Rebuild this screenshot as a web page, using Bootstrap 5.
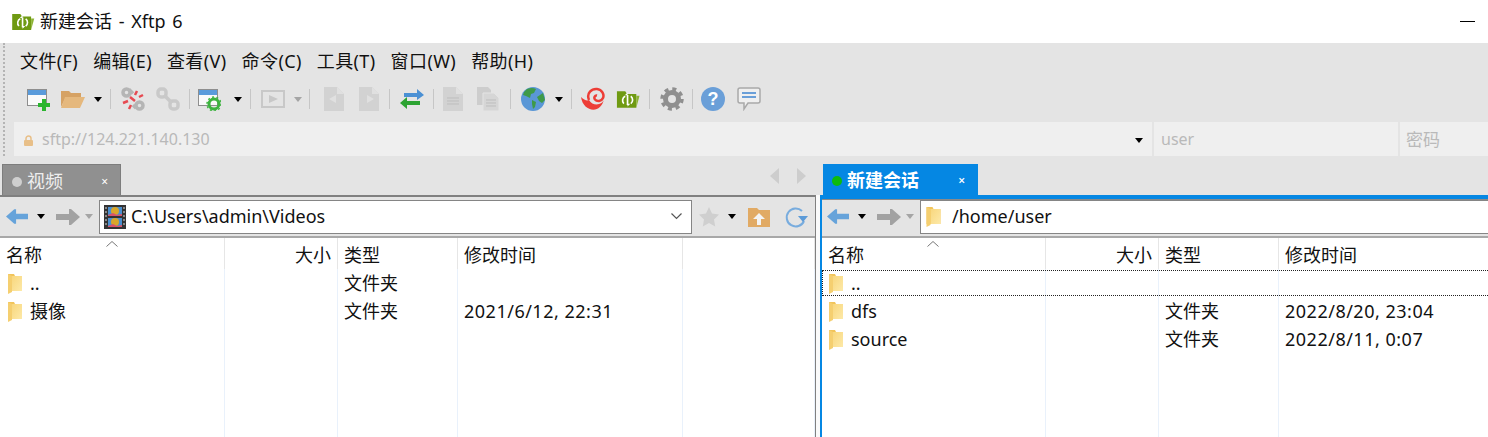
<!DOCTYPE html>
<html lang="zh-CN">
<head>
<meta charset="utf-8">
<title>新建会话 - Xftp 6</title>
<link href="https://cdn.jsdelivr.net/npm/bootstrap@5.3.0/dist/css/bootstrap.min.css" rel="stylesheet">
<style>
html,body{height:437px;overflow:hidden;background:#fff}
body{font-family:"Noto Sans","Noto Sans CJK SC",sans-serif;font-size:18px;color:#111;line-height:1.2}
svg{display:block;flex:none}
.win-title{height:43px;padding-left:11px;gap:5px}
.win-title .t{font-size:18px;word-spacing:2px}
.win-min{width:15px;height:1px;background:#000;margin-right:13px}
.chrome{background:#e4e4e4;height:113px}
.grip{width:3px;margin-left:3px;border-left:2px dotted #b4b4b4;height:113px;flex:none}
.chrome-col{min-width:0;flex:1}
.menu-row{height:37px;padding-left:14px;gap:15px;font-size:18px;letter-spacing:.4px}
.tool-row{height:38px;padding-left:20px}
.sep{width:1px;height:20px;background:#c6c6c6;flex:none}
.tri{width:0;height:0;border-left:4.5px solid transparent;border-right:4.5px solid transparent;border-top:5px solid #000;flex:none}
.tri.off{border-top-color:#a5a5a5}
.m4{margin-left:4px}.m5{margin-left:5px}.m6{margin-left:6px}.m7{margin-left:7px}.m8{margin-left:8px}.m9{margin-left:9px}.m10{margin-left:10px}.m11{margin-left:11px}.m12{margin-left:12px}.m13{margin-left:13px}.m14{margin-left:14px}.m15{margin-left:15px}
.addr-row{height:38px;padding-left:8px;padding-top:4px;gap:2px}
.addr-f{background:#efefef;height:34px;color:#b9b9b9;font-size:16px;padding-top:2px}
.addr-main{width:1138px;padding-left:9px;padding-right:9px}
.addr-user{width:244px;padding-left:7px}
.addr-pass{flex:1;padding-left:6px;font-size:17px}
.tabs-row{height:39px;background:#e4e4e4;flex:none}
.tab-l,.tab-r{height:31px;margin-top:8px;padding-left:9px;padding-top:3px;font-size:18px}
.tab-l{width:119px;margin-left:2px;background:#909090;color:#eee;border:1px solid #7d7d7d;border-bottom:0}
.tab-r{width:155px;margin-left:17px;background:#0587e3;color:#fff;font-weight:600}
.dot{width:10px;height:10px;border-radius:50%;margin-right:5px;flex:none}
.dot-off{background:#cfcfcf}
.dot-on{background:#0dbb0d}
.tab-x{margin-left:auto;color:#fff;font-size:12px;line-height:1}
.tab-l .tab-x{margin-right:12px}
.tab-r .tab-x{margin-right:13px}
.arrows{margin-left:649px;gap:16px}
.panes{height:242px}
.pane-l{width:816px;border-right:1px solid #808080;border-top:2px solid #808080;flex:none}
.pane-mid{width:4px;background:#fafafa;flex:none}
.pane-r{flex:1;min-width:0;border-left:2px solid #0587e3;border-top:4px solid #0587e3;position:relative}
.nav-row{height:39px;background:#e4e4e4;border-bottom:2px solid #a8a8a8;padding-left:6px;box-sizing:content-box;flex:none}
.pane-r .nav-row{height:33px;padding-bottom:3px;border-top:1px solid #8a8a8a;padding-left:5px}
.path-box{height:34px;background:#fff;border:1px solid #858585;padding-left:4px;gap:5px;font-size:18px}
.pane-l .path-box{width:593px;margin-left:6px;padding-right:5px}
.pane-r .path-box{flex:1;margin-left:6px;padding-left:5px;gap:11px;border-right:0}
.lst{display:grid;font-size:18px;grid-template-rows:31px 28px 28px 28px 1fr;height:100%}
.pane-l .lst{grid-template-columns:225px 113px 120px 225px 1fr}
.pane-r .lst{grid-template-columns:224px 113px 120px 1fr}
.lst>div{display:flex;align-items:center;padding-left:6px;padding-top:1px;border-right:1px solid #e9f1fb;white-space:nowrap;min-width:0}
.lst>.hd{border-right-color:#e6e6e6;position:relative;padding-top:4px}
.lst>.num{justify-content:flex-end;padding-right:6px}
.lst>.nm{gap:8px;padding-left:8px}
.pane-r .lst>.nm{padding-left:7px}
.lst>.dt{letter-spacing:.5px}
.sort{position:absolute;right:106px;top:3px}
.sel-row{position:absolute;left:0;right:0;top:71px;height:26px;border:1px dotted #222;border-right:0;pointer-events:none}
</style>
</head>
<body>
<svg width="0" height="0" class="position-absolute">
<defs>
<linearGradient id="fg" x1="0" y1="0" x2="1" y2="1"><stop offset="0" stop-color="#f8d77e"/><stop offset="1" stop-color="#fde9a8"/></linearGradient>
<symbol id="fold" viewBox="0 0 14 21"><path d="M0 1h6l1 2h7v15H0z" fill="#f1c45a"/><path d="M4 3h10v15H4z" fill="url(#fg)"/><path d="M0 1l4 2v16l-4 2z" fill="#f5cf70"/></symbol>
<symbol id="bk" viewBox="0 0 24 18"><path d="M0 9 9 1h2v5h13v6H11v5H9z" fill="#66a3da"/></symbol>
<symbol id="fw" viewBox="0 0 24 18"><path d="M24 9 15 1h-2v5H0v6h13v5h2z" fill="#a2a2a2"/></symbol>
<symbol id="xftp" viewBox="0 0 26 20"><path d="M1 1h9l2 3h10v15H1z" fill="#6f9a12"/><path d="M22 6h3.500L22 19z" fill="#8cb334"/><g fill="none" stroke="#fff" stroke-width="1.800"><path d="M8.500 14.500a5 5 0 0 1 1.500-8"/><path d="M12.500 5v11"/><path d="M16 6.500a5 5 0 0 1 0 8"/></g><path d="M12.500 2.500l-3 3h3zM12.500 17.500l3-3h-3z" fill="#fff"/></symbol>
<symbol id="doc" viewBox="0 0 20 24"><path d="M0 0h13l7 7v17H0z" fill="#d2d2d2"/><path d="M13 0l7 7h-7z" fill="#e0e0e0"/></symbol>
</defs>
</svg>

<div class="d-flex align-items-center win-title">
  <svg width="24" height="18"><use href="#xftp"/></svg>
  <span class="t">新建会话 - Xftp 6</span>
  <span class="win-min ms-auto"></span>
</div>

<div class="chrome d-flex">
  <div class="grip"></div>
  <div class="chrome-col">
    <div class="d-flex align-items-center menu-row"><span>文件(F)</span><span>编辑(E)</span><span>查看(V)</span><span>命令(C)</span><span>工具(T)</span><span>窗口(W)</span><span>帮助(H)</span></div>
    <div class="d-flex align-items-center tool-row">
      <svg width="24" height="24" viewBox="0 0 24 24"><rect x="1.500" y="2.500" width="19" height="16" fill="#fafafa" stroke="#8e8e8e"/><rect x="2" y="3" width="18" height="5" fill="#5a9bdb"/><path d="M16 12h4v4h4v4h-4v4h-4v-4h-4v-4h4z" fill="#2bb52f"/></svg>
      <svg class="m11" width="24" height="20" viewBox="0 0 24 20"><path d="M0 2h8l2 2h10v4H5L0 18z" fill="#d6a264"/><path d="M4 8h20l-5 11H0z" fill="#e5b87d"/></svg>
      <span class="tri m9"></span><span class="sep m8"></span>
      <svg class="m10" width="24" height="24" viewBox="0 0 24 24"><g fill="none" stroke="#b5b5b5" stroke-width="3.500"><circle cx="5.500" cy="5.500" r="3.500"/><circle cx="18.500" cy="18.500" r="3.500"/><path d="M8 2.500l4 4M12 18l3 3"/></g><g stroke="#e64a52" stroke-width="2.500"><path d="M9 10l5 4M16 4l-2 4M22 8l-4 2M2 16l5-2M8 22l2-4"/></g></svg>
      <svg class="m11" width="24" height="24" viewBox="0 0 24 24"><g fill="none" stroke="#c9c9c9" stroke-width="3.500"><rect x="2" y="2" width="8" height="8" rx="3"/><rect x="14" y="14" width="8" height="8" rx="3"/><path d="M8 8l8 8"/></g></svg>
      <span class="sep m9"></span>
      <svg class="m7" width="24" height="24" viewBox="0 0 24 24"><rect x="1.500" y="2.500" width="19" height="16" fill="#fafafa" stroke="#8e8e8e"/><rect x="2" y="3" width="18" height="5" fill="#5a9bdb"/><circle cx="17" cy="17" r="5" fill="none" stroke="#3db33f" stroke-width="3"/><circle cx="17" cy="17" r="7" fill="none" stroke="#3db33f" stroke-width="1.500" stroke-dasharray="2 2.400"/></svg>
      <span class="tri m13"></span><span class="sep m8"></span>
      <svg class="m10" width="24" height="20" viewBox="0 0 24 20"><rect x="1" y="2" width="22" height="16" fill="none" stroke="#c8c8c8" stroke-width="2"/><path d="M8 6l9 4-9 4z" fill="#c8c8c8"/></svg>
      <span class="tri off m9"></span><span class="sep m7"></span>
      <svg class="m14" width="20" height="24" viewBox="0 0 20 24"><use href="#doc"/><path d="M12 8v8l-7-4z" fill="#e0e0e0"/></svg>
      <svg class="m15" width="20" height="24" viewBox="0 0 20 24"><use href="#doc"/><path d="M8 8v8l7-4z" fill="#e0e0e0"/></svg>
      <span class="sep m10"></span>
      <svg class="m10" width="24" height="22" viewBox="0 0 24 22"><path d="M4 5h13V1l7 6-7 5V9H4z" fill="#4a90d4"/><path d="M20 13H7V9l-7 6 7 6v-4h13z" fill="#2da332"/></svg>
      <span class="sep m9"></span>
      <svg class="m9" width="20" height="24" viewBox="0 0 20 24"><use href="#doc"/><path d="M4 11h12M4 14h12M4 17h12" stroke="#bdbdbd"/></svg>
      <svg class="m14" width="22" height="24" viewBox="0 0 22 24"><path d="M0 0h11l3 3v15H0z" fill="#cdcdcd"/><path d="M6 6h11l5 5v13H6z" fill="#d6d6d6" stroke="#e4e4e4"/><path d="M9 13h10M9 16h10M9 19h10" stroke="#bdbdbd"/></svg>
      <span class="sep m11"></span>
      <svg class="m10" width="24" height="24" viewBox="0 0 24 24"><circle cx="12" cy="12" r="12" fill="#5a97d6"/><path d="M6 2q5-2 9 0l-2 4-3 1-1 4-4-2-3-1q1-4 4-6zM16 10l6-4 2 7-3 3-3-2zM11 13l4 2-1 5-2 2-1-5z" fill="#3f9a48"/></svg>
      <span class="tri m10"></span><span class="sep m8"></span>
      <svg class="m9" width="24" height="24" viewBox="0 0 24 24"><path d="M0 10C2 25 20 28 23 12 22 18 12 20 8 13 6 14 3 13 0 10z" fill="#ed3d36"/><path d="M8 13C5 6 11 1.500 16 2c5 .5 7.500 5.500 6 9-1.500 3.500-6 4-8 1.500-1.500-2 0-4.500 2-4" fill="none" stroke="#ed3d36" stroke-width="2.500"/></svg>
      <svg class="m11" width="24" height="19" viewBox="0 0 26 20"><use href="#xftp"/></svg>
      <span class="sep m9"></span>
      <svg class="m10" width="24" height="24" viewBox="0 0 24 24"><circle cx="12" cy="12" r="6.500" fill="none" stroke="#8f8f8f" stroke-width="5"/><circle cx="12" cy="12" r="10" fill="none" stroke="#8f8f8f" stroke-width="3.500" stroke-dasharray="4 3.850"/></svg>
      <span class="sep m8"></span>
      <svg class="m8" width="24" height="24" viewBox="0 0 24 24"><circle cx="12" cy="12" r="12" fill="#6a9fd8"/><text x="12" y="18" text-anchor="middle" font-family="Liberation Sans" font-weight="700" font-size="18" fill="#fff">?</text></svg>
      <svg class="m12" width="24" height="24" viewBox="0 0 24 24"><path d="M3 1h18q2 0 2 2v11q0 2-2 2H11l-4 6v-6H3q-2 0-2-2V3q0-2 2-2z" fill="#efefef" stroke="#a9a9a9" stroke-width="1.500"/><path d="M5 5h14v2H5zM5 9h14v2H5z" fill="#6a9fd8"/></svg>
    </div>
    <div class="d-flex addr-row">
      <div class="addr-f addr-main d-flex align-items-center"><svg width="11" height="11" viewBox="0 0 11 11" class="me-2"><path d="M3 5V3.500a2.500 2.500 0 0 1 5 0V5" fill="none" stroke="#e8bf88" stroke-width="1.500"/><rect x="1" y="5" width="9" height="6" rx="1" fill="#e8bf88"/></svg><span>sftp://124.221.140.130</span><span class="tri ms-auto"></span></div>
      <div class="addr-f addr-user d-flex align-items-center">user</div>
      <div class="addr-f addr-pass d-flex align-items-center">密码</div>
    </div>
  </div>
</div>

<div class="tabs-row d-flex">
  <div class="tab-l d-flex align-items-center"><span class="dot dot-off"></span>视频<span class="tab-x">×</span></div>
  <div class="arrows d-flex align-items-center"><svg width="10" height="16" viewBox="0 0 10 16"><path d="M9 0v16L0 8z" fill="#cdcdcd"/></svg><svg width="10" height="16" viewBox="0 0 10 16"><path d="M1 0v16l9-8z" fill="#cdcdcd"/></svg></div>
  <div class="tab-r d-flex align-items-center"><span class="dot dot-on"></span>新建会话<span class="tab-x">×</span></div>
</div>

<div class="d-flex panes">
  <div class="pane-l d-flex flex-column">
    <div class="nav-row d-flex align-items-center">
      <svg width="22" height="17"><use href="#bk"/></svg><span class="tri m9"></span>
      <svg class="m11" width="24" height="18"><use href="#fw"/></svg><span class="tri off m5"></span>
      <div class="path-box d-flex align-items-center">
        <svg width="22" height="24" viewBox="0 0 22 24"><rect width="22" height="24" fill="#333"/><rect x="4" y="2" width="14" height="9" fill="#4a8fd0"/><rect x="4" y="13" width="14" height="9" fill="#4a8fd0"/><circle cx="11" cy="6" r="4" fill="#d9a62a"/><circle cx="11" cy="17" r="4" fill="#d9a62a"/><path d="M4 10l5-2 4 2 5-1v2H4zM4 21l5-2 4 2 5-1v2H4z" fill="#d8526a"/><path d="M1 3h2M1 7h2M1 11h2M1 15h2M1 19h2M19 3h2M19 7h2M19 11h2M19 15h2M19 19h2" stroke="#ddd"/></svg>
        <span>C:\Users\admin\Videos</span>
        <svg class="ms-auto me-1" width="11" height="7" viewBox="0 0 11 7"><path d="M.5.5l5 5 5-5" fill="none" stroke="#555" stroke-width="1.200"/></svg>
      </div>
      <svg class="m7" width="20" height="20" viewBox="0 0 20 20"><path d="M10 0l3 6.500 7 1-5 5 1.200 7L10 16l-6.200 3.500L5 12.500l-5-5 7-1z" fill="#cfcfcf"/></svg>
      <span class="tri m9"></span>
      <svg class="m12" width="22" height="20" viewBox="0 0 22 20"><path d="M0 1h9l2 2h11v17H0z" fill="#e1aa64"/><path d="M11 6l6 6h-4v6H9v-6H5z" fill="#f3f3f3"/></svg>
      <svg class="m14" width="24" height="24" viewBox="0 0 24 24"><path d="M18 6a9 9 0 1 0 2 10" fill="none" stroke="#78acde" stroke-width="2"/><path d="M14 11h10l-5 6z" fill="#5c9bd8"/></svg>
    </div>
    <div class="lst flex-grow-1">
      <div class="hd">名称<svg class="sort" width="12" height="6" viewBox="0 0 12 6"><path d="M0.500 5.500 6 .5l5.500 5" fill="none" stroke="#777"/></svg></div><div class="hd num">大小</div><div class="hd">类型</div><div class="hd">修改时间</div><div class="hd"></div>
      <div class="nm"><svg width="14" height="21"><use href="#fold"/></svg>..</div><div></div><div>文件夹</div><div></div><div></div>
      <div class="nm"><svg width="14" height="21"><use href="#fold"/></svg>摄像</div><div></div><div>文件夹</div><div class="dt">2021/6/12, 22:31</div><div></div>
      <div></div><div></div><div></div><div></div><div></div>
      <div></div><div></div><div></div><div></div><div></div>
    </div>
  </div>
  <div class="pane-mid"></div>
  <div class="pane-r d-flex flex-column">
    <div class="nav-row d-flex align-items-center">
      <svg width="22" height="17"><use href="#bk"/></svg><span class="tri m9"></span>
      <svg class="m11" width="24" height="18"><use href="#fw"/></svg><span class="tri off m5"></span>
      <div class="path-box d-flex align-items-center"><svg width="15" height="21"><use href="#fold"/></svg><span>/home/user</span></div>
    </div>
    <div class="lst flex-grow-1">
      <div class="hd">名称<svg class="sort" width="12" height="6" viewBox="0 0 12 6"><path d="M0.500 5.500 6 .5l5.500 5" fill="none" stroke="#777"/></svg></div><div class="hd num">大小</div><div class="hd">类型</div><div class="hd border-0">修改时间</div>
      <div class="nm"><svg width="14" height="21"><use href="#fold"/></svg>..</div><div></div><div></div><div class="border-0"></div>
      <div class="nm"><svg width="14" height="21"><use href="#fold"/></svg>dfs</div><div></div><div>文件夹</div><div class="dt border-0">2022/8/20, 23:04</div>
      <div class="nm"><svg width="14" height="21"><use href="#fold"/></svg>source</div><div></div><div>文件夹</div><div class="dt border-0">2022/8/11, 0:07</div>
      <div></div><div></div><div></div><div class="border-0"></div>
    </div>
    <div class="sel-row"></div>
  </div>
</div>
</body>
</html>
